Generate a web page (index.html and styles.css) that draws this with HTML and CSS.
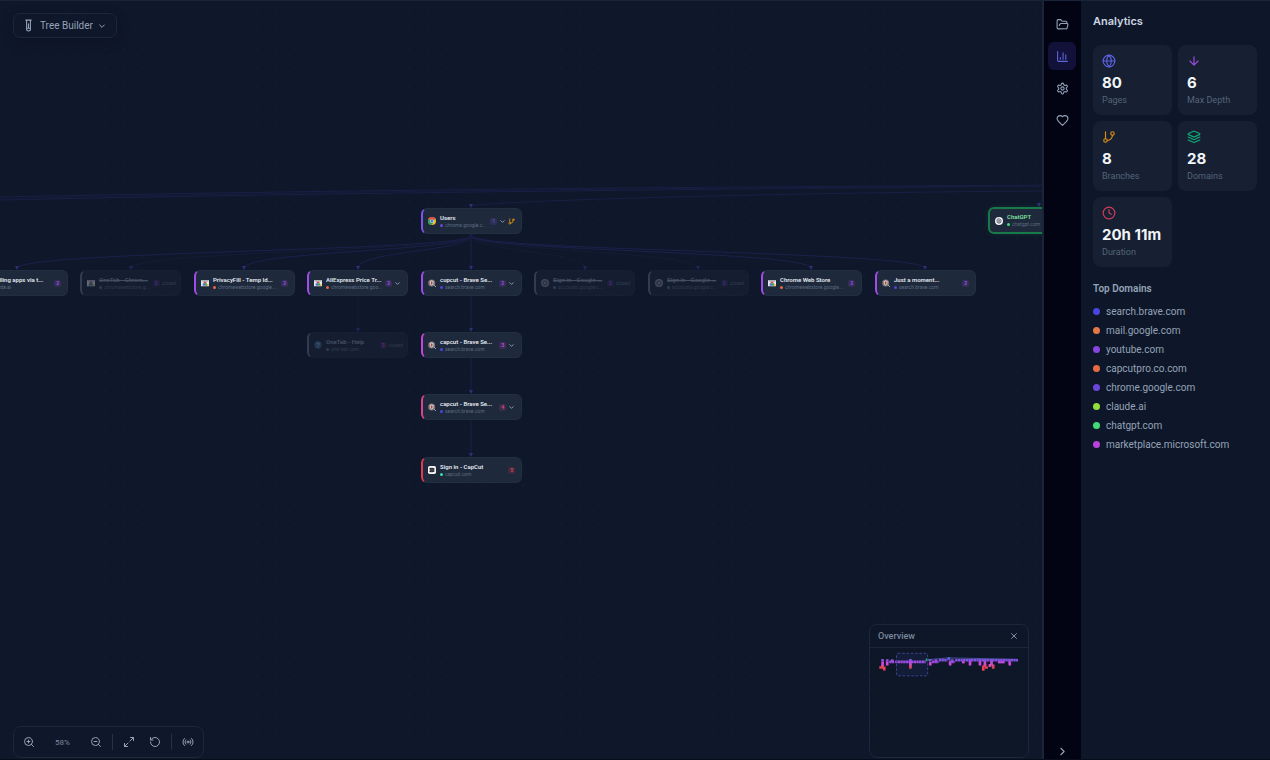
FILE: index.html
```html
<!DOCTYPE html>
<html lang="en">
<head>
<meta charset="utf-8">
<title>Tree Builder</title>
<link rel="stylesheet" href="styles.css">
</head>
<body>
<svg class="sprite" aria-hidden="true">
  <symbol id="chev" viewBox="0 0 24 24"><path d="m6 9 6 6 6-6"/></symbol>
  <symbol id="branch" viewBox="0 0 24 24"><path d="M6 3v12M18 9a9 9 0 0 1-9 9"/><circle cx="18" cy="6" r="3"/><circle cx="6" cy="18" r="3"/></symbol>
  <symbol id="fav-chrome" viewBox="0 0 24 24"><g stroke="none"><circle cx="12" cy="12" r="12" fill="#e9bd31"/><path d="M12 12 1.6 6A12 12 0 0 1 22.4 6z" fill="#df4a3c"/><path d="M1.6 6A12 12 0 0 0 12 24l4-9-6-3z" fill="#2d9d55"/><circle cx="12" cy="12" r="5.6" fill="#f2f4f7"/><circle cx="12" cy="12" r="4.2" fill="#3c7be0"/></g></symbol>
  <symbol id="fav-brave" viewBox="0 0 24 24"><g stroke="none"><circle cx="11" cy="12" r="10.5" fill="#77757f"/><path d="m11 4 6 3-1 8-5 5-5-5-1-8z" fill="#e8cdc8"/><path d="m11 7 3 2-1 6-2 2-2-2-1-6z" fill="#a8483f"/></g><path d="m18 18 5 5" stroke="#a5a7ae" stroke-width="3"/></symbol>
  <symbol id="fav-store" viewBox="0 0 24 24"><g stroke="none"><rect y="3" width="24" height="19" rx="2" fill="#e7eaee"/><path d="M2 3h20v5H2z" fill="#a9aeb8"/><path d="M8 8h8v5H8z" fill="#d9463d"/><path d="M5 13h7v7H5z" fill="#4376c4"/><path d="M12 13h6v7h-6z" fill="#469d60"/><circle cx="20" cy="18" r="3" fill="#e8b839"/></g></symbol>
  <symbol id="fav-account" viewBox="0 0 24 24"><g stroke="none"><circle cx="12" cy="12" r="12" fill="#8a93a5"/><circle cx="12" cy="12" r="8" fill="#4d586c"/><path d="M8 8h8v8H8z" fill="#9b8490"/></g></symbol>
  <symbol id="fav-help" viewBox="0 0 24 24"><g stroke="none"><circle cx="12" cy="12" r="11" fill="#3b6790"/></g><path d="M8 9a4 4 0 1 1 5 4l-1 2M12 18v1" stroke="#bccfe0" stroke-width="2"/></symbol>
  <symbol id="fav-capcut" viewBox="0 0 24 24"><rect width="24" height="24" rx="5" fill="#f5f6f8" stroke="none"/><path d="M6 9V7h9l3 2M6 15v2h9l3-2M6 9l12 6M6 15l12-6" stroke="#15181e" stroke-width="3"/></symbol>
  <symbol id="fav-gpt" viewBox="0 0 24 24"><circle cx="12" cy="12" r="12" fill="#f3f5f7" stroke="none"/><path d="m12 5 6 3.500v7L12 19l-6-3.500v-7zM12 9l3 2v3l-3 2-3-2v-3z" stroke="#343a43" stroke-width="2"/></symbol>
</svg>

<div class="app">
  <main class="canvas">
    <div class="world">
      <svg class="edges" aria-hidden="true">
        <defs><marker id="tip" viewBox="0 0 6 6" refX="3" refY="3" markerWidth="4" markerHeight="4" markerUnits="userSpaceOnUse" orient="0"><path d="M0 0h6L3 6z"/></marker></defs>
        <g class="trunk">
          <path d="M0 197C320 190 700 187 1060 185"/>
          <path d="M0 200C320 193 700 189 1060 186"/>
          <path class="thin" d="M0 199C320 191 700 188 1060 186"/>
          <path marker-end="url(#tip)" d="M1060 191C800 192 480 201 471 206"/>
          <path marker-end="url(#tip)" d="M1060 193Q1039 195 1039 205"/>
        </g>
        <g class="links">
          <path marker-end="url(#tip)" d="M471 236C471 251 17 251 17 268"/>
          <path marker-end="url(#tip)" d="M471 236C471 251 244 251 244 268"/>
          <path marker-end="url(#tip)" d="M471 236C471 251 358 251 358 268"/>
          <path marker-end="url(#tip)" d="M471 236V268"/>
          <path marker-end="url(#tip)" d="M471 236C471 251 811 251 811 268"/>
          <path marker-end="url(#tip)" d="M471 236C471 251 925 251 925 268"/>
          <path marker-end="url(#tip)" d="M471 296V330"/>
          <path marker-end="url(#tip)" d="M471 358V392"/>
          <path marker-end="url(#tip)" d="M471 420V455"/>
          <circle cx="471" cy="235" r="1"/>
        </g>
        <g class="links faint">
          <path marker-end="url(#tip)" d="M471 236C471 251 131 251 131 268"/>
          <path marker-end="url(#tip)" d="M471 236C471 251 585 251 585 268"/>
          <path marker-end="url(#tip)" d="M471 236C471 251 698 251 698 268"/>
          <path marker-end="url(#tip)" d="M358 296V330"/>
        </g>
      </svg>

      <article class="node d1" style="left:421px;top:208px"><svg class="fav"><use href="#fav-chrome"/></svg><div class="info"><h3>Users</h3><p><i class="c-violet"></i>chrome.google.c...</p></div><b>1</b><svg class="ic"><use href="#chev"/></svg><svg class="ic gold"><use href="#branch"/></svg></article>
      <article class="node active" style="left:988px;top:207px"><svg class="fav"><use href="#fav-gpt"/></svg><div class="info"><h3>ChatGPT</h3><p><i class="c-green"></i>chatgpt.com</p></div></article>

      <article class="node d2" style="left:-33px;top:270px"><svg class="fav"><use href="#fav-account"/></svg><div class="info"><h3>Installing apps via t...</h3><p><i class="c-lime"></i>claude.ai</p></div><b>2</b></article>
      <article class="node closed d2" style="left:80px;top:270px"><svg class="fav"><use href="#fav-store"/></svg><div class="info"><h3>OneTab - Chrom...</h3><p><i></i>chromewebstore.g...</p></div><b>2</b><em>closed</em></article>
      <article class="node d2" style="left:194px;top:270px"><svg class="fav"><use href="#fav-store"/></svg><div class="info"><h3>PrivacyFill - Temp Id...</h3><p><i class="c-coral"></i>chromewebstore.google....</p></div><b>2</b></article>
      <article class="node d2" style="left:307px;top:270px"><svg class="fav"><use href="#fav-store"/></svg><div class="info"><h3>AliExpress Price Tr...</h3><p><i class="c-coral"></i>chromewebstore.goo...</p></div><b>2</b><svg class="ic"><use href="#chev"/></svg></article>
      <article class="node d2" style="left:421px;top:270px"><svg class="fav"><use href="#fav-brave"/></svg><div class="info"><h3>cupcut - Brave Se...</h3><p><i class="c-indigo"></i>search.brave.com</p></div><b>2</b><svg class="ic"><use href="#chev"/></svg></article>
      <article class="node closed d2" style="left:534px;top:270px"><svg class="fav"><use href="#fav-account"/></svg><div class="info"><h3>Sign in - Google ...</h3><p><i></i>accounts.google.c...</p></div><b>2</b><em>closed</em></article>
      <article class="node closed d2" style="left:648px;top:270px"><svg class="fav"><use href="#fav-account"/></svg><div class="info"><h3>Sign in - Google ...</h3><p><i></i>accounts.google.c...</p></div><b>2</b><em>closed</em></article>
      <article class="node d2" style="left:761px;top:270px"><svg class="fav"><use href="#fav-store"/></svg><div class="info"><h3>Chrome Web Store</h3><p><i class="c-coral"></i>chromewebstore.google....</p></div><b>2</b></article>
      <article class="node d2" style="left:875px;top:270px"><svg class="fav"><use href="#fav-brave"/></svg><div class="info"><h3>Just a moment...</h3><p><i class="c-indigo"></i>search.brave.com</p></div><b>2</b></article>

      <article class="node closed plain d3" style="left:307px;top:332px"><svg class="fav"><use href="#fav-help"/></svg><div class="info"><h3>OneTab - Help</h3><p><i></i>one-tab.com</p></div><b>3</b><em>closed</em></article>
      <article class="node d3" style="left:421px;top:332px"><svg class="fav"><use href="#fav-brave"/></svg><div class="info"><h3>capcut - Brave Se...</h3><p><i class="c-indigo"></i>search.brave.com</p></div><b>3</b><svg class="ic"><use href="#chev"/></svg></article>
      <article class="node d4" style="left:421px;top:394px"><svg class="fav"><use href="#fav-brave"/></svg><div class="info"><h3>capcut - Brave Se...</h3><p><i class="c-indigo"></i>search.brave.com</p></div><b>4</b><svg class="ic"><use href="#chev"/></svg></article>
      <article class="node d5" style="left:421px;top:457px"><svg class="fav"><use href="#fav-capcut"/></svg><div class="info"><h3>Sign in - CapCut</h3><p><i class="c-mint"></i>capcut.com</p></div><b>5</b></article>
    </div>

    <button class="mode" type="button">
      <svg class="icon" viewBox="0 0 24 24"><path d="M15.500 2v17.500c0 1.400-1.600 2.500-3.500 2.500s-3.500-1.100-3.500-2.500V2M7 2h10M12 9v6M15.500 17h-7"/></svg>
      Tree Builder
      <svg class="icon small" viewBox="0 0 24 24"><path d="m5 9 7 7 7-7"/></svg>
    </button>

    <div class="dock">
      <div class="toolbar" role="toolbar" aria-label="Zoom">
        <button type="button" aria-label="Zoom in"><svg class="icon" viewBox="0 0 24 24"><circle cx="11" cy="11" r="8"/><path d="m21 21-4.300-4.300M11 8v6M8 11h6"/></svg></button>
        <span class="percent">58%</span>
        <button type="button" aria-label="Zoom out"><svg class="icon" viewBox="0 0 24 24"><circle cx="11" cy="11" r="8"/><path d="m21 21-4.300-4.300M8 11h6"/></svg></button>
        <span class="sep"></span>
        <button type="button" aria-label="Fit view"><svg class="icon" viewBox="0 0 24 24"><path d="M15 3h6v6M9 21H3v-6M21 3l-7 7M3 21l7-7"/></svg></button>
        <button type="button" aria-label="Reset"><svg class="icon" viewBox="0 0 24 24"><path d="M3 12a9 9 0 1 0 9-9 9.750 9.750 0 0 0-6.740 2.740L3 8"/><path d="M3 3v5h5"/></svg></button>
        <span class="sep"></span>
        <button type="button" aria-label="Live"><svg class="icon" viewBox="0 0 24 24"><path d="M4.900 19.100C1 15.200 1 8.800 4.900 4.900M7.800 16.200c-2.300-2.300-2.300-6.100 0-8.500M16.200 7.800c2.300 2.300 2.300 6.100 0 8.500M19.100 4.900C23 8.800 23 15.100 19.100 19"/><circle cx="12" cy="12" r="2"/></svg></button>
      </div>

      <section class="overview">
        <header><h2>Overview</h2><button type="button" aria-label="Close overview"><svg class="icon" viewBox="0 0 24 24"><path d="M18 6 6 18M6 6l12 12"/></svg></button></header>
        <svg class="minimap" viewBox="30 97 477 333" aria-hidden="true">
          <path d="M207 132 267 127 475 131" stroke="#4a50a8" stroke-width="3" fill="none"/>
          <g fill="none" stroke-width="8">
            <g stroke="#8453dd">
              <path d="M68 130v8M82 131v7M152 130v8M212 130v8M362 131v8M377 131v8M397 131v8M332 131v8"/>
              <path stroke-dasharray="7 1" d="M238 134h26M287 134h190"/>
              <path stroke="#5b68dd" d="M264 129h8"/><path stroke="#20a866" d="M198 133h9"/>
              <path d="M93 135h8M225 135h8M274 135h8"/>
            </g>
            <g stroke="#a04be0"><path stroke-dasharray="7 1" d="M88 139h16M106 139h92M217 139h20M268 139h18M308 139h8M416 139h20M448 139h8"/></g>
            <g stroke="#cb49dd"><path d="M68 138v13M82 138v12M152 138v10M212 139v11M272 140v10M312 138v5M332 138v12M362 138v12M377 138v14M397 138v12M452 140v10M422 138v5M432 138v5"/></g>
            <g stroke="#df4da5"><path d="M68 148v7M152 146v8M377 146v7M392 145v9M402 147v6"/></g>
            <g stroke="#e24355"><path d="M58 156h14M73 153v12M152 152v8M372 150v16M377 156h9M402 152v8"/></g>
          </g>
          <rect x="110" y="113" width="94" height="68" rx="4" fill="#6366f1" fill-opacity=".08" stroke="#3d4294" stroke-width="3" stroke-dasharray="8 5"/>
        </svg>
      </section>
    </div>
  </main>

  <nav class="rail" aria-label="Sections">
    <button type="button" aria-label="Sessions"><svg class="icon" viewBox="0 0 24 24"><path d="m6 14 1.500-2.900A2 2 0 0 1 9.240 10H20a2 2 0 0 1 1.940 2.500l-1.540 6a2 2 0 0 1-1.950 1.500H4a2 2 0 0 1-2-2V5a2 2 0 0 1 2-2h3.900a2 2 0 0 1 1.690.9l.81 1.200a2 2 0 0 0 1.670.9H18a2 2 0 0 1 2 2v2"/></svg></button>
    <button type="button" class="on" aria-label="Analytics"><svg class="icon" viewBox="0 0 24 24"><path d="M3 3v16a2 2 0 0 0 2 2h16M8 17v-3M13 17V5M18 17V9"/></svg></button>
    <button type="button" aria-label="Settings"><svg class="icon" viewBox="0 0 24 24"><path d="M12.220 2h-.44a2 2 0 0 0-2 2v.18a2 2 0 0 1-1 1.730l-.43.25a2 2 0 0 1-2 0l-.15-.08a2 2 0 0 0-2.730.73l-.22.38a2 2 0 0 0 .73 2.730l.15.1a2 2 0 0 1 1 1.720v.51a2 2 0 0 1-1 1.740l-.15.09a2 2 0 0 0-.73 2.730l.22.38a2 2 0 0 0 2.730.73l.15-.08a2 2 0 0 1 2 0l.43.25a2 2 0 0 1 1 1.730V20a2 2 0 0 0 2 2h.44a2 2 0 0 0 2-2v-.18a2 2 0 0 1 1-1.730l.43-.25a2 2 0 0 1 2 0l.15.08a2 2 0 0 0 2.730-.73l.22-.39a2 2 0 0 0-.73-2.730l-.15-.08a2 2 0 0 1-1-1.740v-.5a2 2 0 0 1 1-1.740l.15-.09a2 2 0 0 0 .73-2.730l-.22-.38a2 2 0 0 0-2.730-.73l-.15.08a2 2 0 0 1-2 0l-.43-.25a2 2 0 0 1-1-1.730V4a2 2 0 0 0-2-2z"/><circle cx="12" cy="12" r="3"/></svg></button>
    <button type="button" aria-label="Support"><svg class="icon" viewBox="0 0 24 24"><path d="M19 14c1.490-1.460 3-3.210 3-5.500A5.500 5.500 0 0 0 16.500 3c-1.760 0-3 .5-4.500 2-1.500-1.500-2.740-2-4.500-2A5.500 5.500 0 0 0 2 8.500c0 2.300 1.500 4.050 3 5.500l7 7Z"/></svg></button>
    <button type="button" class="collapse" aria-label="Collapse panel"><svg class="icon" viewBox="0 0 24 24"><path d="m9 18 6-6-6-6"/></svg></button>
  </nav>

  <aside class="panel">
    <h1>Analytics</h1>
    <div class="stats">
      <div class="stat"><svg class="icon indigo" viewBox="0 0 24 24"><circle cx="12" cy="12" r="10"/><path d="M12 2a14.500 14.500 0 0 0 0 20 14.500 14.500 0 0 0 0-20M2 12h20"/></svg><strong>80</strong><span>Pages</span></div>
      <div class="stat"><svg class="icon purple" viewBox="0 0 24 24"><path d="M12 5v14M19 12l-7 7-7-7"/></svg><strong>6</strong><span>Max Depth</span></div>
      <div class="stat"><svg class="icon amber" viewBox="0 0 24 24"><use href="#branch"/></svg><strong>8</strong><span>Branches</span></div>
      <div class="stat"><svg class="icon emerald" viewBox="0 0 24 24"><path d="m12.830 2.180a2 2 0 0 0-1.660 0L2.600 6.080a1 1 0 0 0 0 1.830l8.580 3.910a2 2 0 0 0 1.660 0l8.580-3.900a1 1 0 0 0 0-1.830ZM22 12l-9.170 4.160a2 2 0 0 1-1.660 0L2 12M22 17l-9.170 4.160a2 2 0 0 1-1.660 0L2 17"/></svg><strong>28</strong><span>Domains</span></div>
      <div class="stat"><svg class="icon rose" viewBox="0 0 24 24"><circle cx="12" cy="12" r="10"/><path d="M12 6v6l4 2"/></svg><strong>20h 11m</strong><span>Duration</span></div>
    </div>
    <h2>Top Domains</h2>
    <ul class="domains">
      <li class="c-indigo">search.brave.com</li>
      <li class="c-orange">mail.google.com</li>
      <li class="c-purple">youtube.com</li>
      <li class="c-coral">capcutpro.co.com</li>
      <li class="c-violet">chrome.google.com</li>
      <li class="c-lime">claude.ai</li>
      <li class="c-green">chatgpt.com</li>
      <li class="c-fuchsia">marketplace.microsoft.com</li>
    </ul>
  </aside>
</div>
</body>
</html>
```

FILE: styles.css
```css
* { box-sizing: border-box; }

body {
  margin: 0;
  background: #0f172a;
  color: #94a3b8;
  font-family: Roboto, "Liberation Sans", sans-serif;
}

h1, h2, h3, p, ul { margin: 0; padding: 0; }

button {
  padding: 0;
  border: 0;
  background: none;
  color: inherit;
  font: inherit;
}

svg {
  fill: none;
  stroke: currentColor;
  stroke-width: 2;
  stroke-linecap: round;
  stroke-linejoin: round;
}

.sprite { display: none; }
.icon { display: block; width: 13px; height: 13px; flex: none; }
.icon.small { width: 8px; height: 8px; stroke-width: 3; }

.app {
  display: flex;
  height: 100vh;
  border-top: 1px solid #1a2438;
  border-bottom: 1px solid #080d1c;
}

/* Canvas */
.canvas {
  position: relative;
  flex: 1;
  display: flex;
  flex-direction: column;
  align-items: flex-start;
  justify-content: space-between;
  min-width: 0;
  padding: 12px 13px 1px;
  overflow: hidden;
  background: #0f172a radial-gradient(circle, #121c30 1px, transparent 1px) 0 0 / 19px 19px;
}

.world { position: absolute; inset: -1px 0 0; }
.edges { position: absolute; inset: 0; width: 100%; height: 100%; stroke-width: 1; }
.edges marker path { fill: #2d3074; stroke: none; }
.trunk { stroke: #191f45; }
.thin { stroke: #151c3c; }
.links { stroke: #1c204c; }
.faint { opacity: .6; stroke: #19203f; }

.node {
  --accent: #8b5cf6;
  position: absolute;
  display: flex;
  align-items: center;
  gap: 2px;
  width: 101px;
  height: 26px;
  padding: 0 6px 0 5px;
  border: 1px solid #222e41;
  border-left: 2px solid var(--accent);
  border-radius: 6px;
  background: #1e293b;
}
.d1 { --accent: #7c55e8; }
.d2 { --accent: #a04ce8; }
.d3 { --accent: #c445d8; }
.d4 { --accent: #d8448f; }
.d5 { --accent: #dd3c50; }

.fav { width: 8px; height: 8px; margin-right: 2px; flex: none; }
.info { flex: 1; min-width: 0; }

.node h3 {
  color: #e2e8f0;
  font-size: 6px;
  font-weight: 600;
  line-height: 8px;
  white-space: nowrap;
}

.node p {
  display: flex;
  align-items: center;
  gap: 2px;
  color: #5d6b83;
  font-size: 5px;
  line-height: 7px;
  white-space: nowrap;
}
.node i { width: 3px; height: 3px; flex: none; border-radius: 50%; background: var(--dot, #64748b); }

.node b {
  padding: 0 2px;
  border-radius: 2px;
  background: color-mix(in srgb, var(--accent) 16%, transparent);
  color: var(--accent);
  font-size: 5px;
  line-height: 7px;
}
.d1 b { color: #5b48b0; }
.ic { width: 7px; height: 7px; flex: none; stroke-width: 3; }
.gold { color: #d58b12; }
.node em { color: #64748b; font-size: 5px; line-height: 7px; }

.closed { padding-right: 4px; opacity: .4; border-left-color: #64748b; }
.closed h3 { color: #94a3b8; text-decoration: line-through; }
.plain h3 { text-decoration: none; }

.active {
  height: 27px;
  border: 2px solid #187a48;
  box-shadow: 0 0 6px #22c55e22;
}
.active h3 { color: #7fe0a2; }

.mode {
  position: relative;
  display: flex;
  align-items: center;
  gap: 5px;
  height: 25px;
  padding: 0 10px 0 8px;
  border: 1px solid #1d273a;
  border-radius: 7px;
  background: #0f172a;
  box-shadow: 0 4px 12px #0a102066;
  font-size: 10px;
}

.dock {
  position: relative;
  display: flex;
  align-items: flex-end;
  justify-content: space-between;
  align-self: stretch;
}

.toolbar {
  display: flex;
  align-items: center;
  height: 32px;
  padding: 0 2px;
  border: 1px solid #1d273a;
  border-radius: 8px;
  background: #0f172a;
}
.toolbar button { display: grid; place-items: center; width: 26px; height: 26px; }
.toolbar .icon { width: 12px; height: 12px; }
.percent { width: 41px; color: #7b889c; font-size: 8px; text-align: center; }
.sep { width: 1px; height: 16px; margin: 0 3px; background: #263145; }

.overview {
  width: 160px;
  height: 134px;
  border: 1px solid #1d273a;
  border-radius: 8px;
  background: #0e1728;
}
.overview header {
  display: flex;
  align-items: center;
  justify-content: space-between;
  height: 23px;
  padding: 0 9px 0 8px;
  border-bottom: 1px solid #1d273a;
}
.overview h2 { color: #7a889d; font-size: 9px; font-weight: 500; }
.overview .icon { width: 10px; height: 10px; }
.minimap { display: block; width: 100%; stroke-linecap: butt; }

/* Icon rail */
.rail {
  display: flex;
  flex-direction: column;
  align-items: center;
  gap: 4px;
  width: 39px;
  flex: none;
  padding: 9px 1px 0 0;
  border-left: 2px solid #1b2537;
  background: #020414;
}
.rail button {
  display: grid;
  place-items: center;
  width: 28px;
  height: 28px;
  border-radius: 6px;
}
.rail .on { background: #11113a; color: #6366d8; }
.rail .collapse { height: 16px; margin-top: auto; }

/* Analytics panel */
.panel {
  width: 189px;
  flex: none;
  padding: 13px 13px 0 12px;
  background: #0e1729;
}
.panel h1 { color: #cbd5e1; font-family: Inter, sans-serif; font-size: 11px; font-weight: 600; line-height: 14px; }

.stats {
  display: grid;
  grid-template-columns: 1fr 1fr;
  gap: 6px;
  margin: 17px 0 15px;
}
.stat {
  display: flex;
  flex-direction: column;
  height: 70px;
  padding: 9px 9px 0;
  border-radius: 8px;
  background: #162032;
}
.stat .icon { width: 14px; height: 14px; }
.stat strong {
  margin-top: 6px;
  color: #f1f5f9;
  font-family: Inter, sans-serif;
  font-size: 15px;
  font-weight: 700;
  line-height: 18px;
  white-space: nowrap;
}
.stat span { margin-top: 2px; color: #55637a; font-size: 9px; line-height: 12px; }
.indigo { color: #5c60e4; }
.purple { color: #9c4ce0; }
.amber { color: #d98c12; }
.emerald { color: #13a878; }
.rose { color: #d43c58; }

.panel h2 { font-size: 10px; font-weight: 600; line-height: 14px; }
.domains { margin-top: 6px; list-style: none; }
.domains li {
  display: flex;
  align-items: center;
  gap: 6px;
  font-size: 10px;
  line-height: 19px;
}
.domains li::before {
  width: 7px;
  height: 7px;
  border-radius: 50%;
  background: var(--dot);
  content: "";
}

.c-indigo { --dot: #4b45e0; }
.c-orange { --dot: #e67845; }
.c-purple { --dot: #8843e0; }
.c-coral { --dot: #e66a43; }
.c-violet { --dot: #6c45dd; }
.c-lime { --dot: #92df3c; }
.c-green { --dot: #3edb76; }
.c-mint { --dot: #3be0a0; }
.c-fuchsia { --dot: #b842dc; }
```
